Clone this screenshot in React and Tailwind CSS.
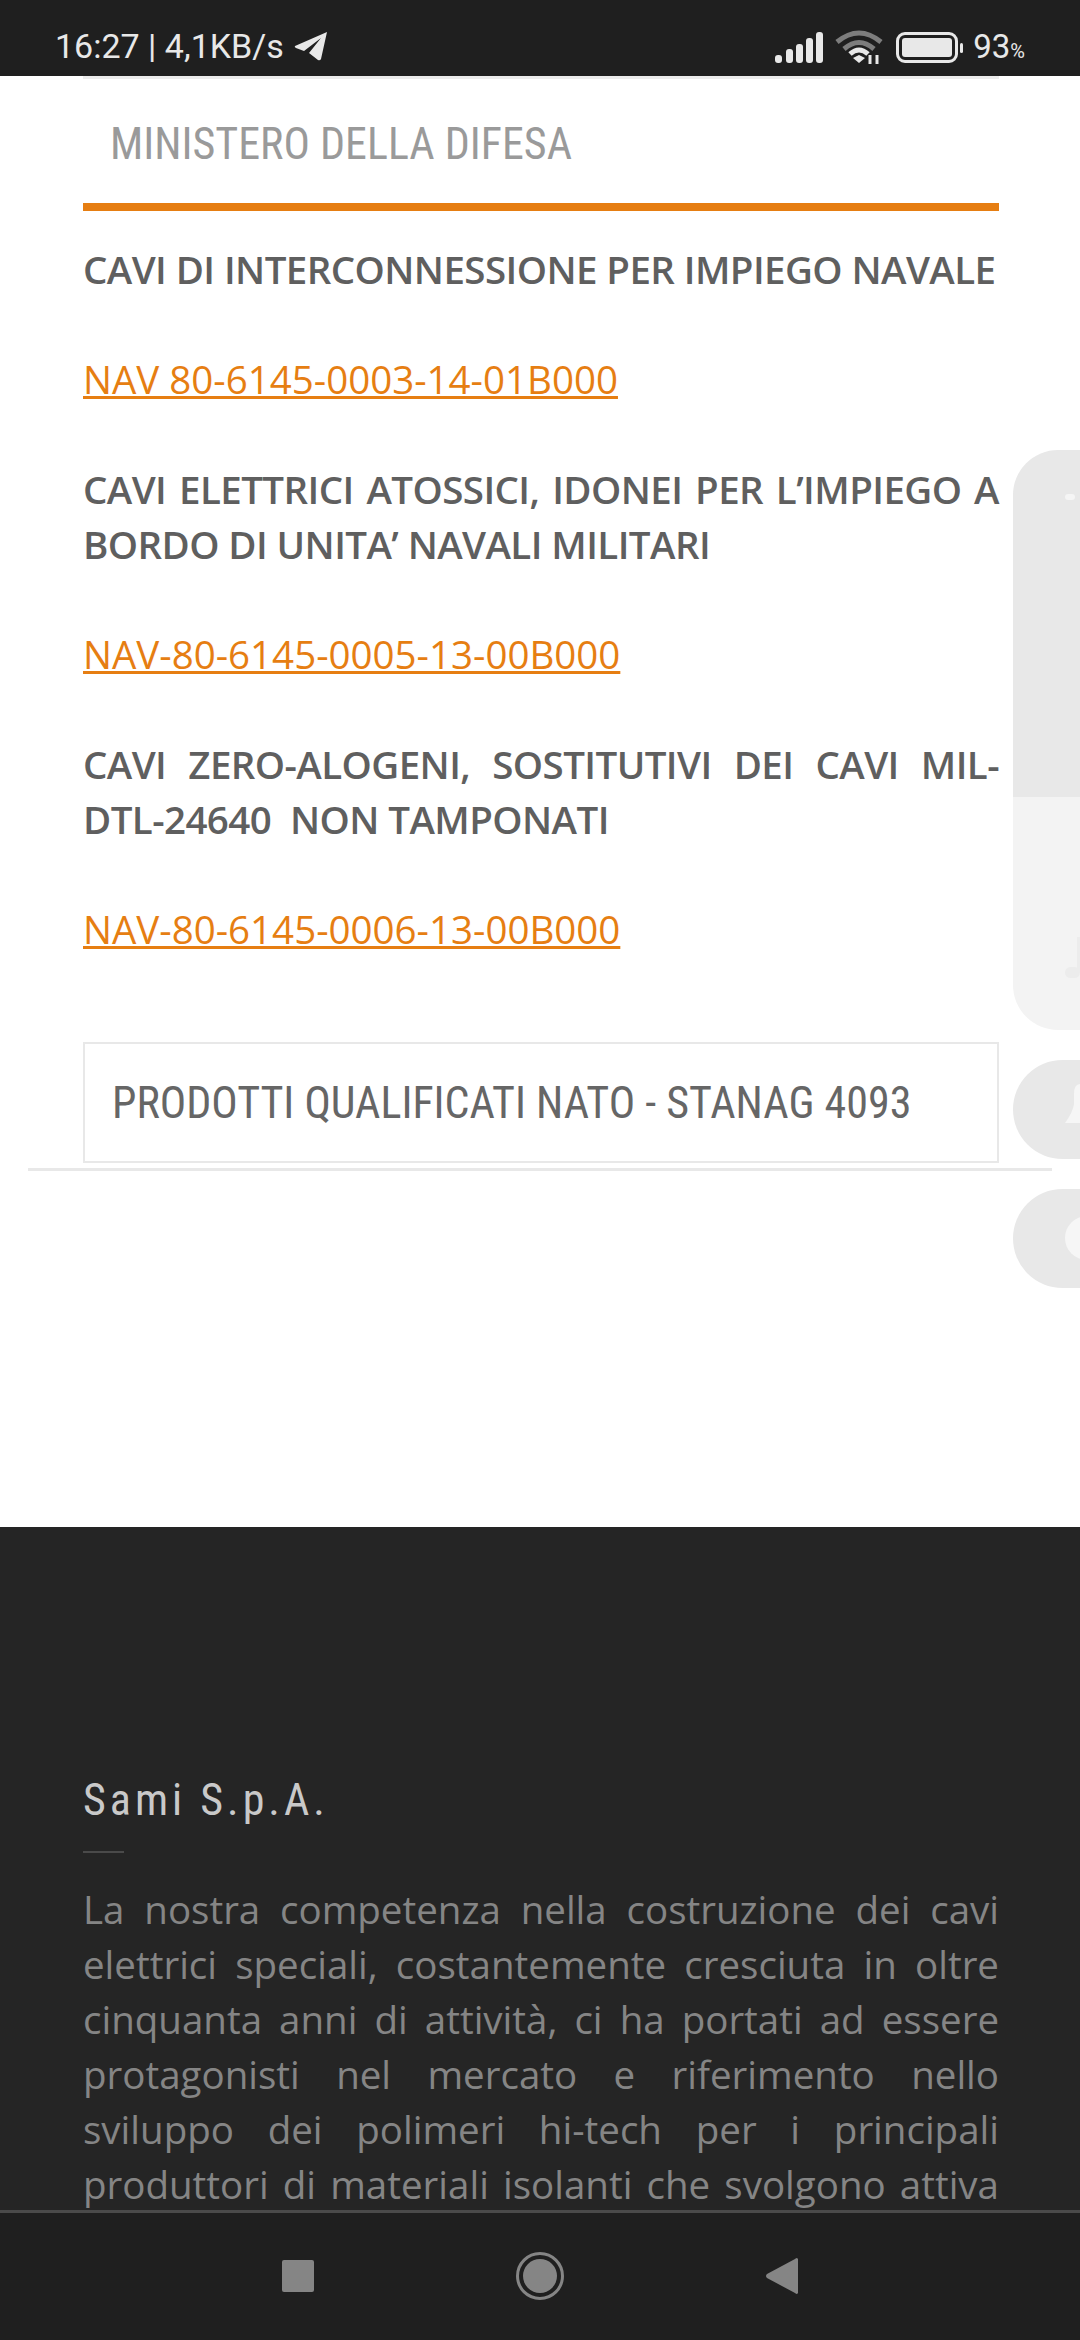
import React from 'react';

const Heading = ({ children }) => (
  <p className="text-[38.5px] leading-[55px] font-semibold tracking-[-0.58px] text-[#5f5f5f] text-justify font-['Open_Sans',sans-serif]">
    {children}
  </p>
);

const DocLink = ({ children }) => (
  <a className="block mt-[55px] mb-[55px] text-[38.5px] leading-[55px] text-[#e67e12] underline font-['Open_Sans',sans-serif]">
    {children}
  </a>
);

const StatusBar = () => (
  <div className="h-[76px] shrink-0 bg-[#1f1f1f] flex items-end justify-between pl-[55px] pr-[55px] pb-[13px] text-[#e8e8e8] font-['Roboto',sans-serif]">
    <div className="flex items-center gap-[10px] text-[34px] leading-[34px]">
      <span>16:27 | 4,1KB/s</span>
      <svg width="34" height="30" viewBox="0 0 34 30" fill="#e8e8e8">
        <path d="M33 1 L1 15 Q0 16 2 17 L10 20 L27 7 L15 22 L24 29 Q26 30 27 28 Z" />
      </svg>
    </div>
    <div className="flex items-end">
      <svg width="48" height="32" viewBox="0 0 48 32" fill="#e8e8e8">
        <rect x="0" y="24" width="7" height="8" rx="3" />
        <rect x="11" y="18" width="7" height="14" rx="3" />
        <rect x="21" y="13" width="7" height="19" rx="3" />
        <rect x="31" y="7" width="7" height="25" rx="3" />
        <rect x="41" y="1" width="7" height="31" rx="3" />
      </svg>
      <svg className="ml-[12px] mb-[-2px]" width="48" height="36" viewBox="0 0 48 36" fill="none">
        <path d="M2 13 Q24 -5 46 13" stroke="#7d7d7d" strokeWidth="5" />
        <path d="M9 20 Q24 7 39 20" stroke="#7d7d7d" strokeWidth="5" />
        <path d="M15 25 Q24 17 33 25" stroke="#e8e8e8" strokeWidth="5" />
        <path d="M18 29 L24 26 L30 29 L24 34 Z" fill="#e8e8e8" />
        <path d="M35 26 L35 35 M42 26 L42 35" stroke="#e8e8e8" strokeWidth="3" />
      </svg>
      <div className="flex items-center gap-[2px] ml-[13px]">
        <div className="w-[62px] h-[31px] rounded-[9px] border-[3px] border-[#e8e8e8] p-[3px]">
          <div className="w-full h-full bg-[#e8e8e8] rounded-[3px]" />
        </div>
        <div className="w-[3px] h-[10px] bg-[#e8e8e8] rounded-full" />
      </div>
      <span className="ml-[10px] mb-[-5px] text-[33px] leading-[34px]">
        93<span className="text-[20px]">%</span>
      </span>
    </div>
  </div>
);

const SidePills = () => (
  <>
    <div className="absolute right-0 top-[374px] w-[67px] h-[580px] rounded-l-[45px] overflow-hidden flex flex-col">
      <div className="h-[347px] bg-[#e8e8e8] relative">
        <div className="absolute left-[52px] top-[44px] w-[10px] h-[6px] rounded-full bg-[#f5f5f5]" />
      </div>
      <div className="flex-1 bg-[#f3f3f3] relative">
        <div className="absolute left-[52px] top-[170px] w-[15px] h-[11px] rounded-full bg-[#ececec]" />
        <div className="absolute left-[64px] top-[140px] w-[3px] h-[36px] bg-[#ececec]" />
      </div>
    </div>
    <div className="absolute right-0 top-[984px] w-[67px] h-[99px] rounded-l-[50px] bg-[#e8e8e8] overflow-hidden">
      <svg className="absolute left-[52px] top-[24px]" width="15" height="39" viewBox="0 0 15 39" fill="#f6f6f6">
        <path d="M15 0 Q9 0 9 10 L9 20 Q8 28 0 39 L15 39 Z" />
      </svg>
    </div>
    <div className="absolute right-0 top-[1113px] w-[67px] h-[99px] rounded-l-[50px] bg-[#e8e8e8] overflow-hidden">
      <div className="absolute left-[52px] top-[27px] w-[44px] h-[44px] rounded-full bg-[#f6f6f6]" />
    </div>
  </>
);

const NavBar = () => (
  <div className="h-[130px] shrink-0 bg-[#1f1f1f] border-t-[3px] border-[#4a4a4a] flex items-center justify-center gap-[202px] pb-[2px]">
    <div className="w-[32px] h-[32px] bg-[#858585] rounded-[2px]" />
    <svg width="48" height="48" viewBox="0 0 48 48">
      <circle cx="24" cy="24" r="22.5" fill="none" stroke="#858585" strokeWidth="3" />
      <circle cx="24" cy="24" r="17" fill="#858585" />
    </svg>
    <svg width="32" height="38" viewBox="0 0 32 38" fill="#858585">
      <path d="M31 1 L32 2 L32 36 L31 37 Q30 37 29 36 L1 21 Q-1 19 1 17 L29 2 Q30 1 31 1 Z" />
    </svg>
  </div>
);

const App = () => {
  return (
    <div className="w-[1080px] h-[2340px] overflow-hidden flex flex-col bg-white">
      <StatusBar />
      <div className="flex-1 min-h-0 overflow-hidden relative">
        <SidePills />
        <div className="pl-[83px] pr-[81px]">
          <div className="h-[3px] bg-[#ececec]" />
          <div className="h-[119px] border-b-[8px] border-[#e67e12] box-content pl-[27px] pt-[5px] flex items-center text-[#9a9a9a] text-[44px] font-stretch-[84%] font-['Roboto',sans-serif]">
            MINISTERO DELLA DIFESA
          </div>
          <div className="pt-[31px]">
            <Heading>CAVI DI INTERCONNESSIONE PER IMPIEGO NAVALE</Heading>
            <DocLink>NAV 80-6145-0003-14-01B000</DocLink>
            <Heading>CAVI ELETTRICI ATOSSICI, IDONEI PER L’IMPIEGO A BORDO DI UNITA’ NAVALI MILITARI</Heading>
            <DocLink>NAV-80-6145-0005-13-00B000</DocLink>
            <Heading>CAVI ZERO-ALOGENI, SOSTITUTIVI DEI CAVI MIL-DTL-24640&nbsp; NON TAMPONATI</Heading>
            <DocLink>NAV-80-6145-0006-13-00B000</DocLink>
          </div>
          <div className="mt-[85px] h-[121px] border-2 border-[#e8e8e8] flex items-center pl-[27px] text-[#666666] text-[44px] font-stretch-[84%] font-['Roboto',sans-serif]">
            PRODOTTI QUALIFICATI NATO - STANAG 4093
          </div>
        </div>
        <div className="mx-[28px] mt-[5px] h-[3px] bg-[#e8e8e8]" />
        <div className="mt-[356px] h-[800px] bg-[#252525] pl-[83px] pr-[81px] pt-[246px]">
          <h4 className="text-[#c9c9c9] text-[44px] leading-[54px] tracking-[4px] font-stretch-[86%] font-['Roboto',sans-serif]">
            Sami S.p.A.
          </h4>
          <div className="mt-[24px] w-[41px] h-[2px] bg-[#4a4a4a]" />
          <p className="mt-[29px] text-[38.5px] leading-[55px] text-[#858585] text-justify [text-align-last:justify] font-['Open_Sans',sans-serif]">
            La nostra competenza nella costruzione dei cavi elettrici speciali, costantemente cresciuta in oltre cinquanta anni di attività, ci ha portati ad essere protagonisti nel mercato e riferimento nello sviluppo dei polimeri hi-tech per i principali produttori di materiali isolanti che svolgono attiva
          </p>
        </div>
      </div>
      <NavBar />
    </div>
  );
};

export default App;
